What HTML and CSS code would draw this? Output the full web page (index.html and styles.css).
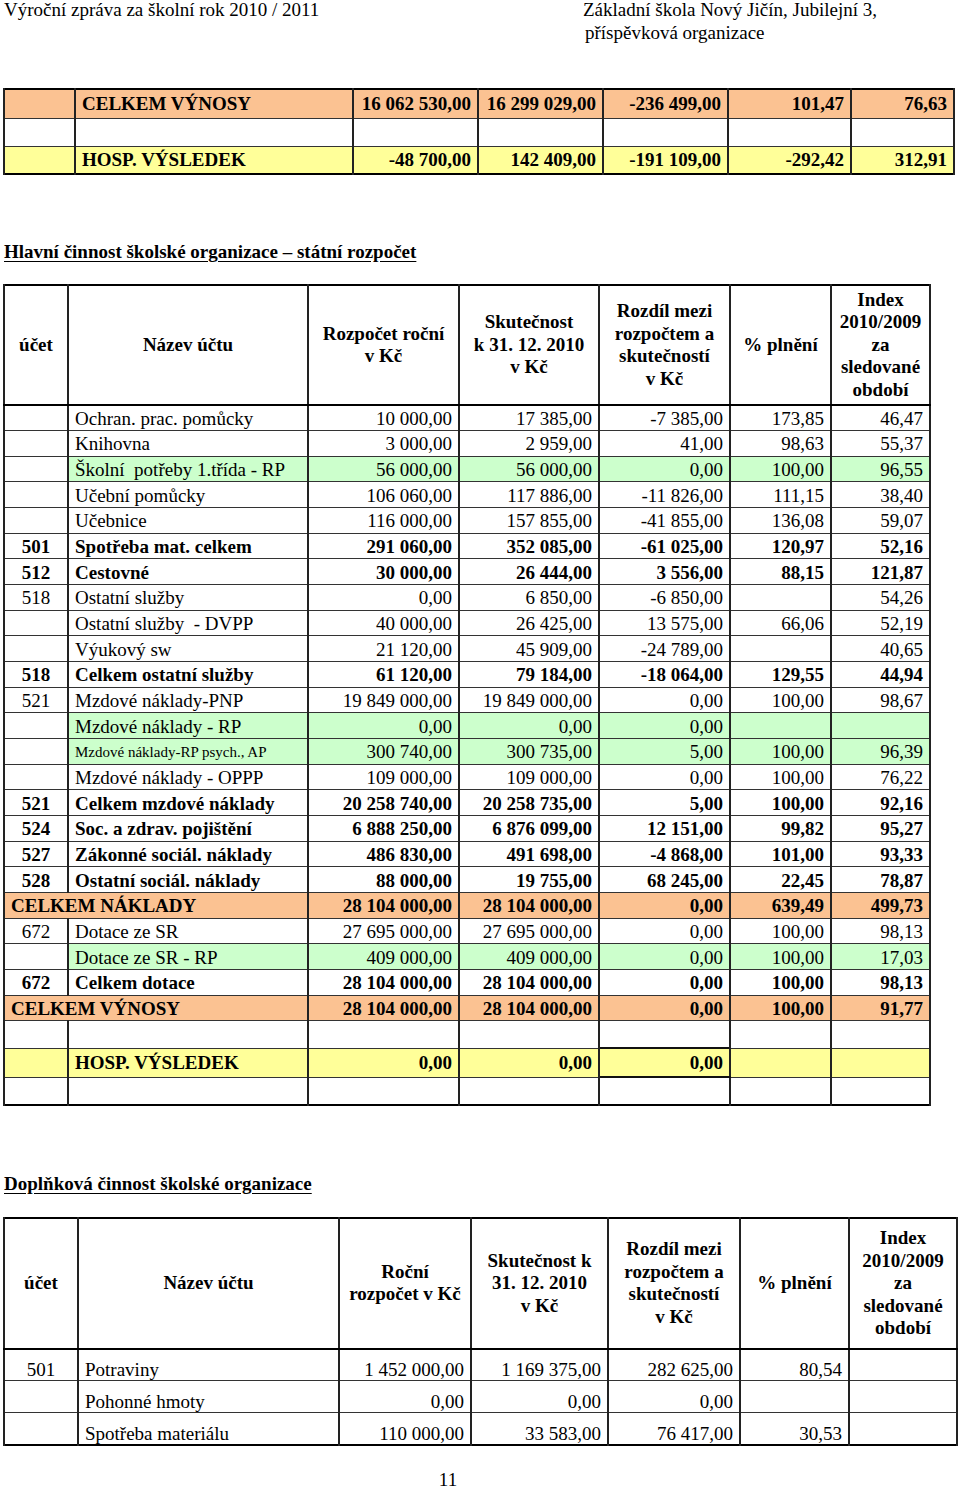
FILE: index.html
```html
<!DOCTYPE html>
<html lang="cs">
<head>
<meta charset="utf-8">
<title>Výroční zpráva</title>
<link rel="stylesheet" href="styles.css">
</head>
<body>
<div class="page">
  <div class="doc-head">
    <div class="left">Výroční zpráva za školní rok 2010 / 2011</div>
    <div class="right">
      <div>Základní škola Nový Jičín, Jubilejní 3,</div>
      <div class="sub">příspěvková organizace</div>
    </div>
  </div>

  <table class="tbl t1">
    <colgroup>
      <col class="w71"><col class="w278"><col class="w125"><col class="w125"><col class="w125"><col class="w123"><col class="w103">
    </colgroup>
    <tr class="orange b r29">
      <td></td><td>CELKEM VÝNOSY</td><td class="n">16 062 530,00</td><td class="n">16 299 029,00</td><td class="n">-236 499,00</td><td class="n">101,47</td><td class="n">76,63</td>
    </tr>
    <tr class="r28">
      <td></td><td></td><td></td><td></td><td></td><td></td><td></td>
    </tr>
    <tr class="yellow b r28">
      <td></td><td>HOSP. VÝSLEDEK</td><td class="n">-48 700,00</td><td class="n">142 409,00</td><td class="n">-191 109,00</td><td class="n">-292,42</td><td class="n">312,91</td>
    </tr>
  </table>

  <h2 class="section h-main">Hlavní činnost školské organizace – státní rozpočet</h2>

  <table class="tbl t2">
    <colgroup>
      <col class="w64"><col class="w240"><col class="w151"><col class="w140"><col class="w131"><col class="w101"><col class="w99">
    </colgroup>
    <tr class="head h2row">
      <th>účet</th><th>Název účtu</th><th>Rozpočet roční<br>v Kč</th><th>Skutečnost<br>k 31. 12. 2010<br>v Kč</th><th>Rozdíl mezi<br>rozpočtem a<br>skutečností<br>v Kč</th><th>% plnění</th><th>Index<br>2010/2009<br>za<br>sledované<br>období</th>
    </tr>
    <tr class="row"><td class="a"></td><td>Ochran. prac. pomůcky</td><td class="n">10 000,00</td><td class="n">17 385,00</td><td class="n">-7 385,00</td><td class="n">173,85</td><td class="n">46,47</td></tr>
    <tr class="row"><td class="a"></td><td>Knihovna</td><td class="n">3 000,00</td><td class="n">2 959,00</td><td class="n">41,00</td><td class="n">98,63</td><td class="n">55,37</td></tr>
    <tr class="row green"><td class="a"></td><td>Školní  potřeby 1.třída - RP</td><td class="n">56 000,00</td><td class="n">56 000,00</td><td class="n">0,00</td><td class="n">100,00</td><td class="n">96,55</td></tr>
    <tr class="row"><td class="a"></td><td>Učební pomůcky</td><td class="n">106 060,00</td><td class="n">117 886,00</td><td class="n">-11 826,00</td><td class="n">111,15</td><td class="n">38,40</td></tr>
    <tr class="row"><td class="a"></td><td>Učebnice</td><td class="n">116 000,00</td><td class="n">157 855,00</td><td class="n">-41 855,00</td><td class="n">136,08</td><td class="n">59,07</td></tr>
    <tr class="row b"><td class="a">501</td><td>Spotřeba mat. celkem</td><td class="n">291 060,00</td><td class="n">352 085,00</td><td class="n">-61 025,00</td><td class="n">120,97</td><td class="n">52,16</td></tr>
    <tr class="row b"><td class="a">512</td><td>Cestovné</td><td class="n">30 000,00</td><td class="n">26 444,00</td><td class="n">3 556,00</td><td class="n">88,15</td><td class="n">121,87</td></tr>
    <tr class="row"><td class="a">518</td><td>Ostatní služby</td><td class="n">0,00</td><td class="n">6 850,00</td><td class="n">-6 850,00</td><td class="n"></td><td class="n">54,26</td></tr>
    <tr class="row"><td class="a"></td><td>Ostatní služby  - DVPP</td><td class="n">40 000,00</td><td class="n">26 425,00</td><td class="n">13 575,00</td><td class="n">66,06</td><td class="n">52,19</td></tr>
    <tr class="row"><td class="a"></td><td>Výukový sw</td><td class="n">21 120,00</td><td class="n">45 909,00</td><td class="n">-24 789,00</td><td class="n"></td><td class="n">40,65</td></tr>
    <tr class="row b"><td class="a">518</td><td>Celkem ostatní služby</td><td class="n">61 120,00</td><td class="n">79 184,00</td><td class="n">-18 064,00</td><td class="n">129,55</td><td class="n">44,94</td></tr>
    <tr class="row"><td class="a">521</td><td>Mzdové náklady-PNP</td><td class="n">19 849 000,00</td><td class="n">19 849 000,00</td><td class="n">0,00</td><td class="n">100,00</td><td class="n">98,67</td></tr>
    <tr class="row green"><td class="a"></td><td>Mzdové náklady - RP</td><td class="n">0,00</td><td class="n">0,00</td><td class="n">0,00</td><td class="n"></td><td class="n"></td></tr>
    <tr class="row green"><td class="a"></td><td><span class="small">Mzdové náklady-RP psych., AP</span></td><td class="n">300 740,00</td><td class="n">300 735,00</td><td class="n">5,00</td><td class="n">100,00</td><td class="n">96,39</td></tr>
    <tr class="row"><td class="a"></td><td>Mzdové náklady - OPPP</td><td class="n">109 000,00</td><td class="n">109 000,00</td><td class="n">0,00</td><td class="n">100,00</td><td class="n">76,22</td></tr>
    <tr class="row b"><td class="a">521</td><td>Celkem mzdové náklady</td><td class="n">20 258 740,00</td><td class="n">20 258 735,00</td><td class="n">5,00</td><td class="n">100,00</td><td class="n">92,16</td></tr>
    <tr class="row b"><td class="a">524</td><td>Soc. a zdrav. pojištění</td><td class="n">6 888 250,00</td><td class="n">6 876 099,00</td><td class="n">12 151,00</td><td class="n">99,82</td><td class="n">95,27</td></tr>
    <tr class="row b"><td class="a">527</td><td>Zákonné sociál. náklady</td><td class="n">486 830,00</td><td class="n">491 698,00</td><td class="n">-4 868,00</td><td class="n">101,00</td><td class="n">93,33</td></tr>
    <tr class="row b"><td class="a">528</td><td>Ostatní sociál. náklady</td><td class="n">88 000,00</td><td class="n">19 755,00</td><td class="n">68 245,00</td><td class="n">22,45</td><td class="n">78,87</td></tr>
    <tr class="row b orange"><td colspan="2" class="lead">CELKEM NÁKLADY</td><td class="n">28 104 000,00</td><td class="n">28 104 000,00</td><td class="n">0,00</td><td class="n">639,49</td><td class="n">499,73</td></tr>
    <tr class="row"><td class="a">672</td><td>Dotace ze SR</td><td class="n">27 695 000,00</td><td class="n">27 695 000,00</td><td class="n">0,00</td><td class="n">100,00</td><td class="n">98,13</td></tr>
    <tr class="row green"><td class="a"></td><td>Dotace ze SR - RP</td><td class="n">409 000,00</td><td class="n">409 000,00</td><td class="n">0,00</td><td class="n">100,00</td><td class="n">17,03</td></tr>
    <tr class="row b"><td class="a">672</td><td>Celkem dotace</td><td class="n">28 104 000,00</td><td class="n">28 104 000,00</td><td class="n">0,00</td><td class="n">100,00</td><td class="n">98,13</td></tr>
    <tr class="row b orange"><td colspan="2" class="lead">CELKEM VÝNOSY</td><td class="n">28 104 000,00</td><td class="n">28 104 000,00</td><td class="n">0,00</td><td class="n">100,00</td><td class="n">91,77</td></tr>
    <tr class="r27"><td></td><td></td><td></td><td></td><td></td><td></td><td></td></tr>
    <tr class="r29 yellow b hosp"><td></td><td>HOSP. VÝSLEDEK</td><td class="n">0,00</td><td class="n">0,00</td><td class="n boxed">0,00</td><td></td><td></td></tr>
    <tr class="r27"><td></td><td></td><td></td><td></td><td></td><td></td><td></td></tr>
  </table>

  <h2 class="section h-side">Doplňková činnost školské organizace</h2>

  <table class="tbl t3">
    <colgroup>
      <col class="w74"><col class="w261"><col class="w132"><col class="w137"><col class="w132"><col class="w109"><col class="w108">
    </colgroup>
    <tr class="head h3row">
      <th>účet</th><th>Název účtu</th><th>Roční<br>rozpočet v Kč</th><th>Skutečnost k<br>31. 12. 2010<br>v Kč</th><th>Rozdíl mezi<br>rozpočtem a<br>skutečností<br>v Kč</th><th>% plnění</th><th>Index<br>2010/2009<br>za<br>sledované<br>období</th>
    </tr>
    <tr class="r32"><td class="a">501</td><td>Potraviny</td><td class="n">1 452 000,00</td><td class="n">1 169 375,00</td><td class="n">282 625,00</td><td class="n">80,54</td><td></td></tr>
    <tr class="r32"><td class="a"></td><td>Pohonné hmoty</td><td class="n">0,00</td><td class="n">0,00</td><td class="n">0,00</td><td class="n"></td><td></td></tr>
    <tr class="r32"><td class="a"></td><td>Spotřeba materiálu</td><td class="n">110 000,00</td><td class="n">33 583,00</td><td class="n">76 417,00</td><td class="n">30,53</td><td></td></tr>
  </table>

  <div class="pagenum">11</div>
</div>
</body>
</html>
```

FILE: styles.css
```css
* { box-sizing: border-box; }

body {
  margin: 0;
  background: #fff;
  color: #000;
  font-family: "Liberation Serif", "Times New Roman", serif;
  font-size: 19px;
}

.page {
  padding-left: 3px;
  width: 960px;
}

.doc-head {
  display: grid;
  grid-template-columns: 580px auto;
  line-height: 23px;
  margin-top: -2px;
}
.doc-head .left { padding-left: 1px; }
.doc-head .sub { padding-left: 2px; }

.section {
  margin: 0;
  font-size: 19px;
  font-weight: bold;
  line-height: 23px;
  text-decoration: underline;
  text-underline-offset: 3px;
  padding-left: 1px;
}
.h-main { margin-top: 65px; margin-bottom: 21px; }
.h-side { margin-top: 66px; margin-bottom: 22px; }

.tbl {
  border-collapse: collapse;
  table-layout: fixed;
  border: 2px solid #000;
}
.tbl td, .tbl th {
  border-left: 2px solid #222;
  border-right: 2px solid #222;
  border-top: 1px solid #333;
  border-bottom: 1px solid #333;
  padding: 0 6px;
  white-space: pre;
  overflow: hidden;
  line-height: 21px;
  vertical-align: middle;
  text-align: left;
}
.tbl th {
  font-weight: bold;
  text-align: center;
  line-height: 22.5px;
  white-space: nowrap;
  border-bottom: 2px solid #000;
}

.t1 { margin-top: 44px; width: 951px; }
.t2 { width: 928px; }
.t3 { width: 954px; }

.w71 { width: 71px; }
.w278 { width: 278px; }
.w125 { width: 125px; }
.w123 { width: 123px; }
.w103 { width: 103px; }

.w64 { width: 64px; }
.w240 { width: 240px; }
.w151 { width: 151px; }
.w140 { width: 140px; }
.w131 { width: 131px; }
.w101 { width: 101px; }
.w99 { width: 99px; }

.w74 { width: 74px; }
.w261 { width: 261px; }
.w132 { width: 132px; }
.w137 { width: 137px; }
.w109 { width: 109px; }
.w108 { width: 108px; }

.r27 td { height: 27.5px; }
.r28 td { height: 28px; }
.r29 td { height: 29px; }
.r32 td { height: 32px; vertical-align: bottom; padding-bottom: 0; }
.row td { height: 25.67px; padding-top: 1px; }
.h2row th { height: 120px; }
.h3row th { height: 131px; }

.tbl td.n { text-align: right; }
.tbl td.a { text-align: center; }
.tbl td.lead { padding-left: 6px; }

.b td { font-weight: bold; }
.orange td { background: #fbc292; }
.yellow td { background: #ffff99; }
.green td:not(:first-child) { background: #ccffcc; }

.hosp td.boxed {
  border-top: 2px solid #111;
  border-bottom: 2px solid #111;
}

.small { font-size: 15px; }

.pagenum {
  margin-top: 25px;
  width: 890px;
  text-align: center;
  line-height: 18px;
}
```
